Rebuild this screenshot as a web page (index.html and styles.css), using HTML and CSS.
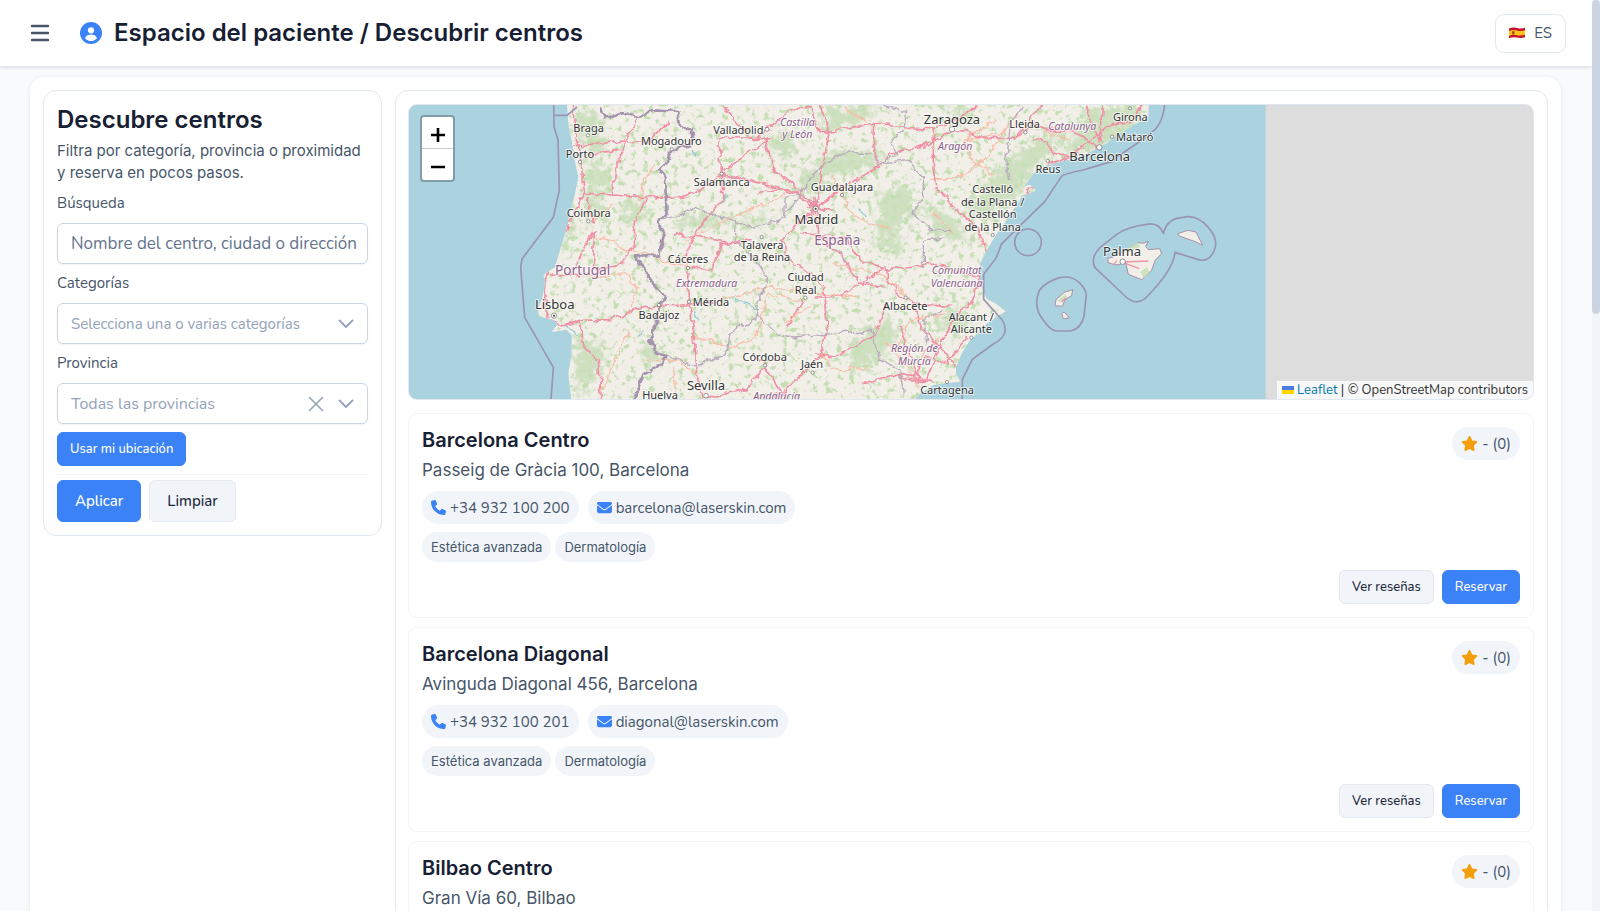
FILE: index.html
```html
<!DOCTYPE html>
<html lang="es">
<head>
<meta charset="utf-8">
<meta name="viewport" content="width=device-width, initial-scale=1">
<title>Espacio del paciente / Descubrir centros</title>
<link rel="stylesheet" href="styles.css">
</head>
<body>
<svg class="sprite" aria-hidden="true">
  <symbol id="phone" viewBox="0 0 512 512"><path d="M164.9 24.6c-7.7-18.6-28-28.5-47.4-23.2l-88 24C12.1 30.2 0 46 0 64C0 311.4 200.6 512 448 512c18 0 33.8-12.1 38.6-29.5l24-88c5.3-19.4-4.6-39.7-23.2-47.4l-96-40c-16.3-6.8-35.2-2.1-46.3 11.6L304.7 368C234.3 334.7 177.3 277.7 144 207.3L193.3 167c13.7-11.2 18.4-30 11.6-46.3l-40-96z"/></symbol>
  <symbol id="mail" viewBox="0 0 512 512"><path d="M48 64C21.5 64 0 85.5 0 112c0 15.1 7.1 29.3 19.2 38.4L236.8 313.6c11.4 8.5 27 8.5 38.4 0L492.8 150.4c12.1-9.1 19.2-23.3 19.2-38.4c0-26.5-21.5-48-48-48H48zM0 176V384c0 35.3 28.7 64 64 64H448c35.3 0 64-28.7 64-64V176L294.4 339.2c-22.8 17.1-54 17.1-76.8 0L0 176z"/></symbol>
  <symbol id="star" viewBox="0 0 576 512"><path d="M316.9 18C311.6 7 300.4 0 288.1 0s-23.4 7-28.8 18L195 150.3 51.4 171.5c-12 1.8-22 10.2-25.7 21.7s-.7 24.2 7.9 32.7L137.8 329 113.2 474.7c-2 12 3 24.2 12.9 31.3s23 8 33.8 2.3l128.3-68.5 128.3 68.5c10.8 5.7 23.9 4.9 33.8-2.3s14.9-19.3 12.9-31.3L438.5 329 542.7 225.9c8.6-8.5 11.7-21.2 7.9-32.7s-13.7-19.9-25.7-21.7L381.2 150.3 316.9 18z"/></symbol>
  <symbol id="chevron" viewBox="0 0 16 16"><path d="M1.5 4.5 8 11l6.500-6.500" fill="none" stroke="currentColor" stroke-width="1.800" stroke-linecap="round" stroke-linejoin="round"/></symbol>
</svg>
<div class="app">
  <div class="page">
    <header class="topbar">
      <button class="menu" type="button" aria-label="Menú">
        <svg viewBox="0 0 20 18" width="20" height="18"><path d="M2 2h16M2 9h16M2 16h16" stroke="currentColor" stroke-width="2.400" stroke-linecap="round"/></svg>
      </button>
      <svg class="user" viewBox="0 0 22 22" aria-hidden="true"><circle cx="11" cy="11" r="11" fill="#3b82f6"/><circle cx="11" cy="8.300" r="3.100" fill="#fff"/><path d="M5 16.200c1-2.600 3.400-3.700 6-3.700s5 1.100 6 3.700c-1.600 1.900-3.700 2.800-6 2.800s-4.400-.9-6-2.800z" fill="#fff"/></svg>
      <h1 class="topbar-title">Espacio del paciente / Descubrir centros</h1>
      <button class="lang" type="button">
        <svg class="flag" viewBox="0 0 16 12" aria-hidden="true"><path d="M0 1.500Q4-.2 8 1t8-.2v9.400q-4 1.400-8 .4t-8 .7z" fill="#c8102e"/><path d="M0 4q4-1.600 8-.5t8-.2v4.500q-4 1.400-8 .4t-8 .7z" fill="#fcc419"/><rect x="3" y="4" width="2.600" height="3.600" rx="1" fill="#a4502c"/></svg>
        <span>ES</span>
      </button>
    </header>
    <main class="shell">
      <form class="filters">
        <h2 class="filters-title">Descubre centros</h2>
        <p class="filters-text">Filtra por categoría, provincia o proximidad y reserva en pocos pasos.</p>
        <div class="field">
          <label for="q">Búsqueda</label>
          <input class="control search" id="q" type="text" placeholder="Nombre del centro, ciudad o dirección">
        </div>
        <div class="field">
          <label for="cat">Categorías</label>
          <div class="pick">
            <select class="control" id="cat"><option>Selecciona una o varias categorías</option></select>
            <svg class="arrow" aria-hidden="true"><use href="#chevron"/></svg>
          </div>
        </div>
        <div class="field">
          <label for="prov">Provincia</label>
          <div class="pick">
            <select class="control large" id="prov"><option>Todas las provincias</option></select>
            <button class="clear" type="button" aria-label="Quitar provincia"><svg viewBox="0 0 16 16" width="16" height="16"><path d="M1.500 1.500l13 13M14.500 1.500l-13 13" stroke="currentColor" stroke-width="1.600" stroke-linecap="round"/></svg></button>
            <svg class="arrow" aria-hidden="true"><use href="#chevron"/></svg>
          </div>
        </div>
        <button class="btn primary small locate" type="button">Usar mi ubicación</button>
        <div class="filters-actions">
          <button class="btn primary" type="submit">Aplicar</button>
          <button class="btn" type="reset">Limpiar</button>
        </div>
      </form>

      <section class="results">
        <div class="map">
          <svg class="map-canvas" viewBox="27 44 3375 882" preserveAspectRatio="xMinYMin slice" role="img" aria-label="Mapa de centros">
            <defs>
              <filter id="woods" x="0" y="0" width="100%" height="100%" color-interpolation-filters="sRGB">
                <feTurbulence type="fractalNoise" baseFrequency=".055" numOctaves="6" seed="11"/>
                <feColorMatrix values="0 0 0 0 .77  0 0 0 0 .87  0 0 0 0 .70  0 6 0 0 -3.350"/>
                <feComposite in2="SourceGraphic" operator="in"/>
              </filter>
              <filter id="soft" x="-20%" y="-20%" width="140%" height="140%" color-interpolation-filters="sRGB"><feGaussianBlur stdDeviation="8"/></filter>
              <filter id="rough" x="0" y="0" width="100%" height="100%" color-interpolation-filters="sRGB">
                <feTurbulence type="fractalNoise" baseFrequency=".035" numOctaves="3" seed="4"/>
                <feDisplacementMap in="SourceGraphic" scale="24" xChannelSelector="R" yChannelSelector="G"/>
              </filter>
              <filter id="ragged" x="0" y="0" width="100%" height="100%" color-interpolation-filters="sRGB">
                <feTurbulence type="fractalNoise" baseFrequency=".04" numOctaves="4" seed="8"/>
                <feDisplacementMap in="SourceGraphic" scale="90" xChannelSelector="R" yChannelSelector="G"/>
              </filter>
              <path id="land" d="M500 30L505 100 515 150 522 200 535 260 525 310 510 370 495 430 480 480 465 530 430 553 437 575 425 630 412 655 418 678 458 688 474 700 455 725 500 718 515 735 515 790 505 850 515 940H1535L1560 910 1600 885 1640 878 1682 874 1668 850 1668 830 1685 790 1710 750 1740 725 1760 700 1817 663 1790 642 1760 625 1740 580 1740 520 1760 480 1790 430 1820 390 1850 345 1865 320 1908 300 1890 283 1872 288 1905 245 1945 225 2010 207 2060 190 2110 165 2160 130 2200 105 2245 80 2247 30Z"/>
              <clipPath id="landclip"><use href="#land"/></clipPath>
            </defs>
            <rect x="27" y="44" width="2570" height="900" fill="#aad3df"/>
            <use href="#land" fill="#f2efe9"/>
            <g clip-path="url(#landclip)">
              <g filter="url(#ragged)"><g filter="url(#soft)" fill="#b7d6a6" opacity=".6">
                <path d="M520 50l80 30 20 90-50 50-20-60zM560 210l60 10 20 70-80 30zM660 340l70-20 10 50-60 40zM480 440l50-50-20 100zM520 750l80 0 20 50-30 50-50 80z"/>
                <path d="M1180 290l90-90 90-20 110 20-80 40-100 20-60 60zM1250 60l160-20 30 30-150 50zM1440 310l80-30 30 80-60 60 30 80-90-30zM1340 830l30-100 90-40 50 20-30 50-100 90z"/>
                <path d="M1700 350l60-80 90-80 80-60 70 0-80 100-110 120-50 60zM1560 320l120 80 30 60-90-20zM2060 60l180-20-20 60-130 80-100 20zM1600 700l60-50 60 20-40 70zM1190 150l-20 60-70-30 50-60z"/>
                <path d="M820 395l90-30 110 25 110-10-20 20-270 12zM560 320h40l20 60-60 20zM730 740l60 50-50 60zM1640 50l80 0-20 50z"/>
              </g></g>
              <rect x="400" y="40" width="1850" height="900" fill="#fff" filter="url(#woods)"/>
              <g filter="url(#rough)" fill="none">
                <path stroke="#8fc7dd" stroke-width="4" d="M980 310l-12 25M1320 485l20 30M1385 350l10 30M1000 620l30 20 50 15M715 740l15-20M870 180l20 20M880 660l15 30M490 700l40 30"/>
                <g stroke="#f9bda8" stroke-width="4">
                  <path d="M640 340l-60 50M580 440l50 10 40 30 80 10M760 220l-30 60-10 50M690 720l-30 60-60 130M740 810h90l60 40M870 530l-60-10-60-30M860 450l140-70 160-70M880 740l120 30 70-30 30-130 100 20M1240 610l-130-20-170 40M560 560l120-10 30 40-10 60M820 830l10 100"/>
                  <path d="M1300 260l60 120 110 40M1420 110l-90-60M1590 270l90-10 80-60 60-90M1790 90l-100 60 20 50 70 60M1600 370l60 60M1250 610l120 10M1520 610l-90-60-130-30M1490 780l40-90 110-20M1460 760l60 60 40 70M1150 700l80-50M1620 740l-60 60M1930 120l80 30M1400 830l-100 10-40-60M1860 70l-60 60-110 20"/>
                </g>
                <g stroke="#f090a5" stroke-width="5">
                  <path d="M520 44l10 110 14 50 4 90 4 14-60 120-50 110-8 90 15 60 40 18 60-16 85-2 70-30 65-12 80-5 95-3M552 308l110 8 180 6 70-30 55-40 60 15 70 15 100 30M965 250l-10-110M970 50l90 100 50-30M955 140l150 6-140 100M967 252l5 70-70 80-40 70 3 160 15 80 14 160 20 110M865 535h70l30-75 90-10M820 430l80 10 80 15M535 690l20 80 40 40 10 130M738 320l-35 70v70l-40 60-70 20M710 80l-40 90-20 60-15 80M520 170l50-8 100-10 60 10 80-70M560 190l100-10M580 400l-20-80M578 530l2-110-65 130M540 560l-90-10"/>
                  <path d="M1101 118l70-60 60-10 30 80 110-20 60-10 150 20 110-40 60-50M1425 95l-5 60 10 60 0 18-110 60-70 60-60-60-70-60-25-90M1430 235l50-50 90-15 90-50M1247 355l-70 60-30 30 10 50 110 90 15 120-20 90-110 110-70 30-30 60-110 100M1247 355l-80-60-90 10M1247 355l40-230-30-80M1247 355l10 80 60 50 60 90 80 15M1200 430l80 5 60 15 40 60 80 30 60-10 90-10 60 20 90 30M1295 620l60-20 105-75 3 50M1247 620l45 0M1210 630l-50 80M1460 570l50 50 30 20 120 5M1540 640l20 70 60 60 50 60M1240 790l60 10 120-60 40-100M1600 110l0 110 10 70 50 60 70 60 30 80M1655 118l110 26 80 0 80-100M1840 150l60-50 50 20 60 0 30 10 60 50M1830 380l60-80 60-80 60-20 50-40 70-60 60 0 40-60M1900 145l40 10 20 30 50 15M1750 530l-30 100-40 30-60 100-40 110-70-20-120 30M1560 870l-40-100-20-60M1700 740l-60 80-60-20-40 60M2060 40l10 60 40 60M2110 50l-10 110"/>
                  <path d="M1220 330l60 30M1230 380l40-50M1225 350l70 10M1240 320l20 60M1500 860l100 15M920 925l120-30 55-65-30-40M1095 830l60 90"/>
                </g>
                <g stroke="#b9abbd" stroke-width="4">
                  <path d="M775 390l60-10 50-30 60 25 70 20 40 20 100-30 0-60 40-10M1010 390v60l60 60 30 50-20 70-10 50-80 50-10 60-60 20-20 20-40-10-40-20-60-20M1070 670l60 60 50 10 230-20 30 90 60 30 10 70M1280 215l60-30 60 5 60 30 60-10 50 50 0 50-30 60 60 50 50 0M1280 215l-60 60-30 60-50 50M1640 440l-70 10 0 80M1450 44l70 20-10 60-40 30 20 40-60 30M1870 50l-40 60-10 100 10 60M1630 660l-60 30 10 60"/>
                </g>
              </g>
              <path filter="url(#rough)" fill="none" stroke="#a593ad" stroke-width="8" stroke-linejoin="round" d="M600 50l10 35 60-20 50 15 40-20 75 5 5 40 45 25-20 35-45 15-40 60 15 20 5 110-25 25 20 40-15 60-75 5 50 70 40 50-20 50-25 80 20 40 30 5-10 25-60 30-20 60 0 70"/>
            </g>
            <g fill="#f2efe9" stroke="#a78fa8" stroke-width="3">
              <path d="M2165 487l50-30 15 2 15-6-8 15 8 10 34-3 6 15-20 20-10 30-30 28-40-16-8-36-26 8-26-6-2-14 16-4z"/><path d="M2333 430l30-10 25 5 20 40-20-10-50-18zM1968 628l25-22 25-8-3 18-20 12-8 20-22-2zM1985 670l8-5 15 18-18 2z"/>
            </g>
            <path fill="#c5dfb4" opacity=".8" d="M2175 478l38-22 8 12-30 18zM2220 545l22-14 6 16-16 16zM1972 632l24-20 6 8-20 16z"/>
            <path fill="none" stroke="#f094a8" stroke-width="4" d="M2165 515l80-3M2178 520l40 15M2150 510l-8 14M1985 635l12-12"/>
            <g fill="none" stroke="#9b94b4" stroke-width="5">
              <path d="M461 44l1 65 12 40 4 150-18 82-94 125-4 25 12 150 86 150-8 110M463 75h38l30-25M2294 44q-5 45-25 70-35 30-65 50-45 30-70 50-50 15-85 25-60 12-65 20l-50 75-70 68-60 60-15 40-38 50v75l45 50q25 25 18 50-5 20-35 35l-62 45-30 60v50q-5 40-35 50"/>
              <circle cx="1884" cy="456" r="40"/>
              <path d="M2290 430q-12-35-50-28-60 8-90 30l-50 40q-30 30-15 60l90 85q30 30 60 8 85-85 90-139l70 22q30 8 45-22 20-35-15-75-35-40-75-30-50 2-60 50zM1918 600q20-25 60-38 35-8 60 15 25 25 20 45l-6 55q-8 38-40 45h-40q-20 0-40-30-35-40-14-92z"/>
            </g>
            <g class="nodes">
              <circle cx="564" cy="135" r="5"/><circle cx="540" cy="215" r="5"/><circle cx="815" cy="177" r="5"/><circle cx="1101" cy="117" r="6"/><circle cx="965" cy="250" r="5"/><circle cx="565" cy="393" r="5"/><circle cx="1085" cy="440" r="5"/><circle cx="864" cy="533" r="5"/><circle cx="867" cy="634" r="5"/><circle cx="777" cy="644" r="5"/><circle cx="1095" cy="825" r="5"/><circle cx="918" cy="916" r="7"/><circle cx="462" cy="676" r="8"/><circle cx="1247" cy="355" r="8"/><circle cx="1326" cy="314" r="5"/><circle cx="1656" cy="117" r="8"/><circle cx="1876" cy="126" r="5"/><circle cx="1778" cy="434" r="5"/><circle cx="1216" cy="622" r="5"/><circle cx="1517" cy="622" r="5"/><circle cx="1714" cy="742" r="5"/><circle cx="1238" cy="847" r="5"/><circle cx="1641" cy="875" r="5"/><circle cx="1943" cy="212" r="5"/><circle cx="2136" cy="139" r="5"/><circle cx="2098" cy="171" r="8"/><circle cx="2190" cy="54" r="5"/><circle cx="2168" cy="514" r="8"/>
            </g>
            <circle cx="462" cy="676" r="3" fill="#333"/><circle cx="1247" cy="355" r="3" fill="#333"/>
            <g class="town">
              <text x="566" y="125">Braga</text><text x="540" y="202">Porto</text><text x="814" y="165">Mogadouro</text><text x="1015" y="130">Valladolid</text><text x="965" y="287">Salamanca</text><text x="566" y="380">Coimbra</text><text x="1086" y="476">Talavera</text><text x="1086" y="513">de la Reina</text><text x="864" y="518">Cáceres</text><text x="933" y="647">Mérida</text><text x="777" y="686">Badajoz</text><text x="1094" y="813">Córdoba</text><text x="780" y="927">Huelva</text>
              <text x="1326" y="301">Guadalajara</text><text x="1874" y="112">Lleida</text><text x="1778" y="309">Castelló</text><text x="1778" y="347">de la Plana /</text><text x="1778" y="384">Castellón</text><text x="1778" y="422">de la Plana</text><text x="1217" y="572">Ciudad</text><text x="1217" y="610">Real</text><text x="1516" y="658">Albacete</text><text x="1714" y="692">Alacant /</text><text x="1714" y="729">Alicante</text><text x="1236" y="834">Jaén</text><text x="1641" y="912">Cartagena</text><text x="2191" y="91">Girona</text><text x="2204" y="151">Mataró</text><text x="1944" y="248">Reus</text>
            </g>
            <g class="town city">
              <text x="464" y="655">Lisboa</text><text x="918" y="900">Sevilla</text><text x="1249" y="402">Madrid</text><text x="1656" y="102">Zaragoza</text><text x="2099" y="212">Barcelona</text><text x="2166" y="498">Palma</text>
            </g>
            <g class="town country"><text x="548" y="555">Portugal</text><text x="1312" y="465">España</text></g>
            <g class="town region">
              <text x="920" y="590">Extremadura</text><text x="1192" y="106">Castilla</text><text x="1192" y="143">y León</text><text x="1666" y="178">Aragón</text><text x="1670" y="551">Comunitat</text><text x="1670" y="589">Valenciana</text><text x="1543" y="785">Región de</text><text x="1543" y="823">Murcia</text><text x="1130" y="930">Andalucía</text><text x="2017" y="119">Catalunya</text>
            </g>
          </svg>
          <div class="zoom">
            <button type="button" aria-label="Acercar"><svg viewBox="0 0 14 14" width="14" height="14"><path d="M7 0v14M0 7h14" stroke="#000" stroke-width="2.600"/></svg></button>
            <button type="button" aria-label="Alejar"><svg viewBox="0 0 14 14" width="14" height="14"><path d="M0 7h14" stroke="#000" stroke-width="2.600"/></svg></button>
          </div>
          <div class="credit"><svg viewBox="0 0 12 8" width="12" height="8" aria-hidden="true"><path fill="#4c7be1" d="M0 0h12v4H0z"/><path fill="#ffd500" d="M0 4h12v4H0z"/></svg> <a href="#">Leaflet</a> | © OpenStreetMap contributors</div>
        </div>

        <article class="card">
          <div class="card-head">
            <div class="card-names"><h3>Barcelona Centro</h3><p>Passeig de Gràcia 100, Barcelona</p></div>
            <span class="pill rating"><svg class="star"><use href="#star"/></svg>- (0)</span>
          </div>
          <div class="contacts">
            <span class="pill"><svg><use href="#phone"/></svg>+34 932 100 200</span>
            <span class="pill"><svg><use href="#mail"/></svg>barcelona@laserskin.com</span>
          </div>
          <div class="tags"><span>Estética avanzada</span><span>Dermatología</span></div>
          <div class="card-actions"><button class="btn small" type="button">Ver reseñas</button><button class="btn primary small" type="button">Reservar</button></div>
        </article>

        <article class="card">
          <div class="card-head">
            <div class="card-names"><h3>Barcelona Diagonal</h3><p>Avinguda Diagonal 456, Barcelona</p></div>
            <span class="pill rating"><svg class="star"><use href="#star"/></svg>- (0)</span>
          </div>
          <div class="contacts">
            <span class="pill"><svg><use href="#phone"/></svg>+34 932 100 201</span>
            <span class="pill"><svg><use href="#mail"/></svg>diagonal@laserskin.com</span>
          </div>
          <div class="tags"><span>Estética avanzada</span><span>Dermatología</span></div>
          <div class="card-actions"><button class="btn small" type="button">Ver reseñas</button><button class="btn primary small" type="button">Reservar</button></div>
        </article>

        <article class="card">
          <div class="card-head">
            <div class="card-names"><h3>Bilbao Centro</h3><p>Gran Vía 60, Bilbao</p></div>
            <span class="pill rating"><svg class="star"><use href="#star"/></svg>- (0)</span>
          </div>
        </article>
      </section>
    </main>
  </div>
  <div class="scrollbar" aria-hidden="true"><div class="thumb"></div></div>
</div>
</body>
</html>
```
FILE: styles.css
```css
* { box-sizing: border-box; }
body {
  margin: 0;
  background: #f8fafc;
  color: #475569;
  font-family: Nunito, Lato, "Noto Sans", sans-serif;
  font-size: 15px;
}
h1, h2, h3, p { margin: 0; font-family: Inter, sans-serif; }
h1, h2, h3 { color: #172033; font-weight: 600; }
button, input, select { font-family: inherit; color: inherit; }
button { cursor: pointer; }
.sprite { display: none; }

.app { display: flex; height: 100vh; overflow: hidden; }
.page { flex: 1; min-width: 0; }
.scrollbar { width: 8px; background: #f1f5f9; }
.thumb { height: 34.5%; border-radius: 4px; background: #cbd5e1; }

.topbar {
  display: flex;
  align-items: center;
  height: 67px;
  padding: 0 26px 0 30px;
  background: #fff;
  border-bottom: 1px solid #e2e8f0;
  box-shadow: 0 1px 3px rgba(15, 23, 42, .12);
}
.menu { display: flex; padding: 0; border: 0; background: none; color: #475569; }
.user { width: 22px; height: 22px; margin: 0 12px 0 30px; }
.topbar-title { flex: 1; font-size: 24px; line-height: 32px; }
.lang {
  display: flex;
  align-items: center;
  gap: 9px;
  height: 39px;
  padding: 0 13px;
  border: 1px solid #e2e8f0;
  border-radius: 9px;
  background: #fff;
  font-size: 15px;
}
.flag { width: 16px; height: 12px; }

.shell {
  display: grid;
  grid-template-columns: 339px minmax(0, 1fr);
  align-items: start;
  gap: 13px;
  margin: 10px 31px 0 30px;
  padding: 13px;
  border-radius: 14px;
  background: #fff;
  box-shadow: 0 1px 4px rgba(15, 23, 42, .1);
}
.filters, .results { border: 1px solid #e2e8f0; border-radius: 13px; padding: 13px; }
.filters { display: flex; flex-direction: column; }
.results { padding-left: 12px; }
.filters-title { font-size: 24px; line-height: 32px; }
.filters-text { margin-top: 4px; font-size: 15px; line-height: 22px; }
.field { display: flex; flex-direction: column; gap: 9px; margin-top: 8px; }
.field label { line-height: 22px; }
.control {
  width: 100%;
  height: 41px;
  padding: 0 13px;
  border: 1px solid #cbd5e1;
  border-radius: 6px;
  background: #fff;
  font-size: 15px;
  appearance: none;
  box-shadow: 0 1px 2px rgba(15, 23, 42, .05);
}
.search { padding-right: 10px; font-size: 17px; }
.search::placeholder { color: #64748b; }
select.control { color: #94a3b8; }
select.large { font-size: 16px; }
.pick { position: relative; }
.arrow { position: absolute; right: 14px; top: 13px; width: 16px; height: 16px; color: #94a3b8; pointer-events: none; }
.clear { position: absolute; right: 44px; top: 13px; display: flex; padding: 0; border: 0; background: none; color: #94a3b8; }
.btn {
  height: 42px;
  padding: 0 17px;
  border: 1px solid #e2e8f0;
  border-radius: 6px;
  background: #f1f5f9;
  color: #1e293b;
  font-size: 15px;
  font-weight: 500;
}
.btn.primary { border-color: #3b82f6; background: #3b82f6; color: #fff; }
.btn.small { height: 34px; padding: 0 12px; font-size: 13px; }
.locate { align-self: flex-start; margin-top: 8px; }
.filters-actions { display: flex; gap: 8px; margin-top: 8px; padding-top: 5px; border-top: 1px solid #f1f5f9; }

.map {
  position: relative;
  height: 296px;
  margin-bottom: 13px;
  overflow: hidden;
  border: 1px solid #e2e8f0;
  border-radius: 9px;
  background: #ddd;
}
.map-canvas { display: block; width: 1125px; height: 294px; }
.nodes { fill: #fff; stroke: #666; stroke-width: 2px; }
.town {
  fill: #333;
  stroke: rgba(255, 255, 255, .7);
  stroke-width: 6px;
  stroke-linejoin: round;
  paint-order: stroke;
  font-family: "Noto Sans", sans-serif;
  font-size: 33px;
  text-anchor: middle;
}
.city { font-size: 39px; }
.country { font-size: 41px; fill: #8d618b; }
.region { font-size: 32px; font-style: italic; fill: #8d618b; }
.zoom {
  position: absolute;
  top: 10px;
  left: 11px;
  display: grid;
  border: 2px solid rgba(0, 0, 0, .25);
  border-radius: 4px;
  background: #fff;
  background-clip: padding-box;
}
.zoom button { display: grid; place-items: center; width: 31px; height: 31px; padding: 5px 0 0; border: 0; background: none; }
.zoom button + button { height: 32px; border-top: 1px solid #ccc; }
.credit {
  position: absolute;
  right: 0;
  bottom: 0;
  padding: 0 5px;
  background: rgba(255, 255, 255, .8);
  color: #333;
  font-size: 13px;
  line-height: 18px;
}
.credit a { color: #0078a8; text-decoration: none; }

.card { margin-bottom: 9px; padding: 13px; border: 1px solid #f1f5f9; border-radius: 9px; }
.card-head { display: flex; justify-content: space-between; align-items: flex-start; }
.card h3 { font-size: 20px; line-height: 26px; }
.card p { margin-top: 4px; font-size: 17px; line-height: 26px; }
.pill {
  display: inline-flex;
  align-items: center;
  gap: 4px;
  height: 33px;
  padding: 0 9px;
  border-radius: 17px;
  background: #f1f5f9;
  font-size: 15px;
}
.pill svg { width: 15px; height: 15px; fill: #3b82f6; }
.pill .star { width: 17px; fill: #f59e0b; }
.contacts { display: flex; gap: 9px; margin-top: 8px; }
.tags { display: flex; gap: 4px; margin-top: 8px; }
.tags span { padding: 0 9px; border-radius: 15px; background: #f1f5f9; font-family: Inter, sans-serif; font-size: 13px; line-height: 30px; }
.card-actions { display: flex; justify-content: flex-end; gap: 8px; margin-top: 8px; }
```
